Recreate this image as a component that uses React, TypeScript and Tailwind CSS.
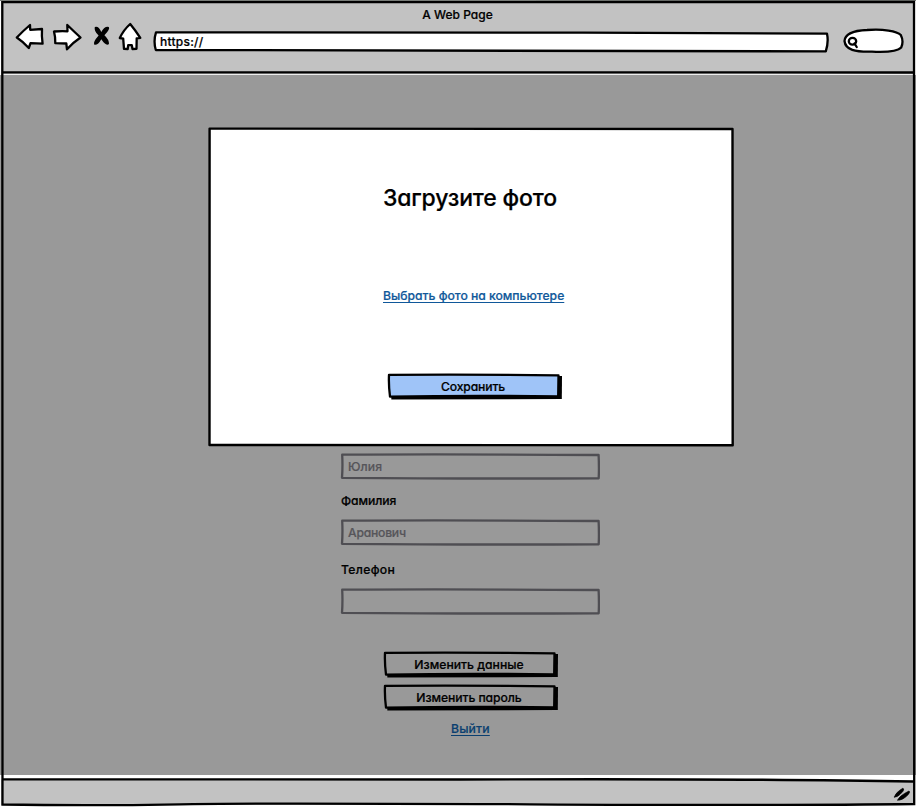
import type { ReactNode } from "react";

const FONT = "font-['Inter','Noto_Sans',sans-serif] [font-feature-settings:'cv11','ss03'] [-webkit-text-stroke:0.2px]";

function Label({ children, className }: { children: ReactNode; className: string }) {
  return <span className={`block whitespace-nowrap ${className}`}>{children}</span>;
}

function BrowserIcons() {
  return (
    <svg className="block h-[32px] w-[128px] shrink-0" viewBox="15 20 128 32" fill="#fff" stroke="#000" strokeWidth="2.3" strokeLinejoin="round" strokeLinecap="round">
      <path d="M16.8 37.5 Q23 31 30 25 L30.2 29.8 L42 29 Q41.5 36 42.6 43.7 L30.5 43.2 L28.8 48 Q23.5 42 16.8 37.5Z" />
      <path d="M54 31.5 Q61 31 67.5 31.3 L67.3 25 Q74 31.5 80.5 37.5 Q73 42.5 67 49.3 L66.3 43.5 L55.3 43.2 Q55.5 37 54 31.5Z" />
      <path d="M94.8 27 Q98.5 25.5 101.3 32 Q104.5 26 108.8 27 Q110.5 29 104.4 35.3 Q109 39.5 109 44 Q106 46.5 101.3 39.3 Q98 45.5 94.3 44.8 Q92.5 42.5 98.6 35.6 Q93.8 31 94.8 27Z" fill="#000" stroke="none" />
      <path d="M130.2 24 Q135.5 30.5 140.3 37.8 L136.7 38.3 L136.5 48.8 L132.5 49 L131.8 45.2 L128.2 45.2 L127.7 49 L124 48.8 L123.2 38.6 L119.8 38 Q123.5 30 130.2 24Z" />
    </svg>
  );
}

function AddressBar() {
  return (
    <div className="relative h-[22px] w-[676px]">
      <svg className="absolute inset-0 h-[22px] w-[676px]" viewBox="0 0 676 22">
        <path d="M3 1.4 Q250 .8 430 1.6 L674 2.7 Q675.8 11 672.8 20.4 L2.8 19 Q.2 10 3 1.4Z" fill="#fff" stroke="#000" strokeWidth="2.3" strokeLinejoin="round" />
      </svg>
      <Label className="relative pl-[7px] text-[12px] font-medium leading-[22px] tracking-[0.25px]">https://</Label>
    </div>
  );
}

function SearchBox() {
  return (
    <svg className="block h-[26px] w-[62px]" viewBox="843 28 62 26" fill="none" stroke="#000" strokeWidth="2.3" strokeLinecap="round">
      <path d="M844.5 41 C845 33 855 30.5 867 30 C883 28.7 897 31 900.8 35 C902.8 39 902.8 44 901.2 47.5 C898 51 887 52.3 872 51.6 C855 52 845.5 50 844.5 41Z" fill="#fff" />
      <ellipse cx="852.5" cy="41.3" rx="3.7" ry="3.4" />
      <path d="M854.5 43.5 L856.7 47" />
    </svg>
  );
}

function Header() {
  return (
    <header className="relative h-[75px] bg-[#c2c2c2]">
      <div className="flex h-[30px] justify-center pr-px">
        <Label className="text-[12px] font-medium leading-[29px] tracking-[0.02px]">A Web Page</Label>
      </div>
      <div className="-mt-[10px] flex items-start pl-[15px]">
        <BrowserIcons />
        <div className="ml-[10px] mt-[11px]"><AddressBar /></div>
        <div className="ml-[14px] mt-[8px]"><SearchBox /></div>
      </div>
    </header>
  );
}

function Field({ value, className = "" }: { value?: string; className?: string }) {
  return (
    <div className="relative h-[27px] w-[260px]">
      <svg className="absolute inset-0 h-[27px] w-[260px]" viewBox="0 0 260 27" fill="none" stroke="#4f4e53" strokeWidth="2.3" strokeLinejoin="round">
        <path d="M2.2 1.7 Q110 1.1 258.6 2 Q259.2 14 258.7 25.3 Q120 25.9 2 24.8 Q2.8 14 2.2 1.7Z" />
      </svg>
      {value && <Label className={`relative pl-[8px] text-[12.2px] font-medium leading-[27px] text-[#56555a] ${className}`}>{value}</Label>}
    </div>
  );
}

function Button({ children, fill, className = "" }: { children: ReactNode; fill: string; className?: string }) {
  return (
    <div className="relative h-[27px] w-[176px]">
      <svg className="absolute inset-0 h-[27px] w-[176px]" viewBox="0 0 176 27">
        <path d="M4.5 4 L175 3 L174.8 26.1 L4.3 26.4Z" />
        <path d="M2 1.9 Q82 1.2 171.5 2.4 L171.2 23.3 Q82 22.2 3 23.6 Q1.5 12 2 1.9Z" fill={fill} stroke="#000" strokeWidth="2.3" strokeLinejoin="round" />
      </svg>
      <Label className={`relative w-[172px] text-center text-[12.2px] font-medium leading-[27px] ${className}`}>{children}</Label>
    </div>
  );
}

function Modal() {
  return (
    <section className="absolute left-[208px] top-[127px] flex h-[320px] w-[526px] flex-col">
      <svg className="absolute inset-0 h-[320px] w-[526px]" viewBox="0 0 526 320" fill="#fff" stroke="#000" strokeWidth="2.4" strokeLinejoin="round">
        <path d="M1.6 1.6 Q260 .9 524.5 2 L524.7 318.2 Q280 317.2 1.5 318 Q2.2 160 1.6 1.6Z" />
      </svg>
      <h1 className="relative pl-[175px] pt-[55px]"><Label className="text-[23px] font-medium leading-[32px] tracking-[-0.17px]">Загрузите фото</Label></h1>
      <a className="relative mt-[72px] w-fit pl-[175px]"><Label className="text-[12.2px] font-medium leading-[20px] tracking-[-0.02px] text-[#10589a] underline underline-offset-[2px]">Выбрать фото на компьютере</Label></a>
      <div className="relative mt-[67px] pl-[179px]"><Button fill="#9fc4f8" className="tracking-[-0.16px]">Сохранить</Button></div>
    </section>
  );
}

export default function App() {
  return (
    <div className={`relative flex h-[807px] w-[916px] flex-col overflow-hidden bg-white text-black ${FONT}`}>
      <Header />
      <main className="h-[700px] bg-[#999]">
        <div className="flex flex-col pl-[340px] pt-[378px]">
          <Field value="Юлия" className="tracking-[0.1px]" />
          <Label className="ml-px mt-[11px] text-[12.2px] font-medium leading-[20px] tracking-[-0.08px]">Фамилия</Label>
          <div className="mt-[8px]"><Field value="Аранович" className="tracking-[-0.25px]" /></div>
          <Label className="ml-px mt-[14px] text-[12.2px] font-medium leading-[20px] tracking-[0.3px]">Телефон</Label>
          <div className="mt-[8px]"><Field /></div>
          <div className="ml-[43px] mt-[36px] flex flex-col gap-[6px]">
            <Button fill="#999">Изменить данные</Button>
            <Button fill="#999" className="tracking-[-0.09px]">Изменить пароль</Button>
          </div>
          <a className="ml-[111px] mt-[8px] w-fit"><Label className="text-[12.2px] font-medium leading-[20px] tracking-[0.17px] text-[#0a3f70] underline underline-offset-[2px]">Выйти</Label></a>
        </div>
      </main>
      <footer className="mt-[5px] h-[25px] bg-[#c2c2c2]" />
      <svg className="pointer-events-none absolute inset-0 h-[807px] w-[916px]" viewBox="0 0 916 807" fill="none" stroke="#000" strokeWidth="2.3" strokeLinecap="round">
        <path d="M0 0H1V75H0Z M0 775H1V807H0Z M915 0H916V75H915Z M915 775H916V807H915Z M0 806H916V807H0Z" fill="#fff" stroke="none" />
        <path d="M0 0H916V1H0Z" fill="#777b77" stroke="none" />
        <path d="M3 74.5H914" stroke="#eee" strokeWidth="1" strokeLinecap="butt" />
        <path d="M913 776V781L780 779V776Z" fill="#fff" stroke="none" />
        <path d="M2.3 2.1 Q460 1.3 914 2 Q913 400 914.2 804 Q780 805.7 530 804.3 Q240 803 180 804.3 Q90 806 2.5 804.5 Q3 500 2.3 2.1Z" />
        <path d="M3 72.3 Q450 73.2 913 72.5 M3 779.3 Q190 780.3 460 779.5 Q750 778.5 913 781.5" />
        <path d="M894.5 797 Q895.5 792.5 902.8 788.3 Q904.5 788.5 903 791.2 Q897.5 797.8 894.5 797Z M897.8 800 Q899 796 909 791 Q910.5 791.5 908.3 794.5 Q902 801 897.8 800Z" fill="#000" strokeWidth=".7" />
      </svg>
      <Modal />
    </div>
  );
}
